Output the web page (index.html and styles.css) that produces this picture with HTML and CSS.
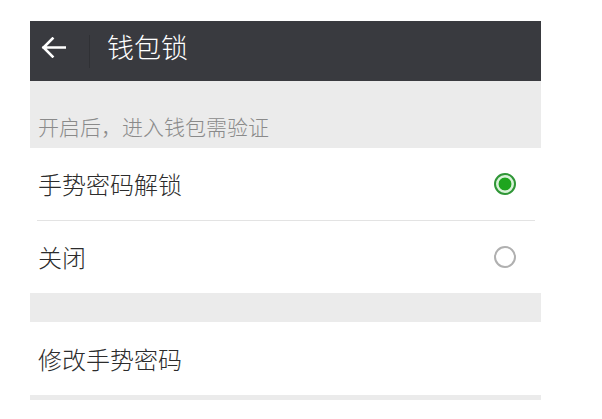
FILE: index.html
```html
<!DOCTYPE html>
<html lang="zh-CN">
<head>
<meta charset="utf-8">
<title>钱包锁</title>
<link rel="stylesheet" href="styles.css">
</head>
<body>
<div class="screen">
  <header class="bar">
    <svg class="back" width="25" height="21" viewBox="0 0 25 21" aria-hidden="true">
      <path d="M24.5 10.5H2.5M11.5 1.5L2.5 10.5L11.5 19.5" fill="none" stroke="#ffffff" stroke-width="2.6" stroke-linecap="square" stroke-linejoin="miter"/>
    </svg>
    <span class="divider"></span>
    <h1 class="title">钱包锁</h1>
  </header>
  <div class="tip">开启后，进入钱包需验证</div>
  <div class="group">
    <div class="row">
      <span class="label">手势密码解锁</span>
      <span class="radio checked"></span>
    </div>
    <div class="sep"></div>
    <div class="row">
      <span class="label">关闭</span>
      <span class="radio"></span>
    </div>
  </div>
  <div class="gap"></div>
  <div class="group">
    <div class="row row-tall">
      <span class="label">修改手势密码</span>
    </div>
  </div>
  <div class="gap gap-small"></div>
</div>
</body>
</html>
```

FILE: styles.css
```css
html, body {
  margin: 0;
  padding: 0;
  background: #ffffff;
}

body {
  font-family: "Noto Sans CJK SC", "Noto Sans", sans-serif;
}

.screen {
  width: 511px;
  margin: 21px 0 0 30px;
}

.bar {
  height: 60px;
  box-sizing: border-box;
  padding: 0 0 8px 11px;
  background: #393a3f;
  display: flex;
  align-items: center;
}

.back {
  display: block;
  flex: none;
}

.divider {
  width: 1px;
  height: 33px;
  margin-left: 23px;
  margin-top: 8px;
  background: #303135;
}

.title {
  margin: 0 0 0 17px;
  font-size: 27px;
  font-weight: 300;
  line-height: 34px;
  color: #ffffff;
}

.tip {
  height: 67px;
  box-sizing: border-box;
  padding: 0 0 7px 8px;
  background: #ebebeb;
  display: flex;
  align-items: flex-end;
  font-size: 21px;
  font-weight: 300;
  line-height: 30px;
  color: #8a8a8a;
}

.group {
  background: #ffffff;
}

.row {
  height: 72px;
  box-sizing: border-box;
  padding: 0 25px 0 8px;
  display: flex;
  align-items: center;
  justify-content: space-between;
}

.row-tall {
  height: 73px;
}

.label {
  font-size: 24px;
  font-weight: 300;
  line-height: 32px;
  color: #2c2c2c;
}

.sep {
  height: 1px;
  margin: 0 6px 0 7px;
  background: #e3e3e3;
}

.radio {
  width: 22px;
  height: 22px;
  box-sizing: border-box;
  border-radius: 50%;
  border: 2px solid #b0b0b0;
}

.radio.checked {
  border: 2px solid #2f9636;
  background: radial-gradient(circle, #1fa51f 0 6px, #d8f2d8 6.8px);
}

.gap {
  height: 29px;
  background: #ebebeb;
}

.gap-small {
  height: 5px;
}
```
